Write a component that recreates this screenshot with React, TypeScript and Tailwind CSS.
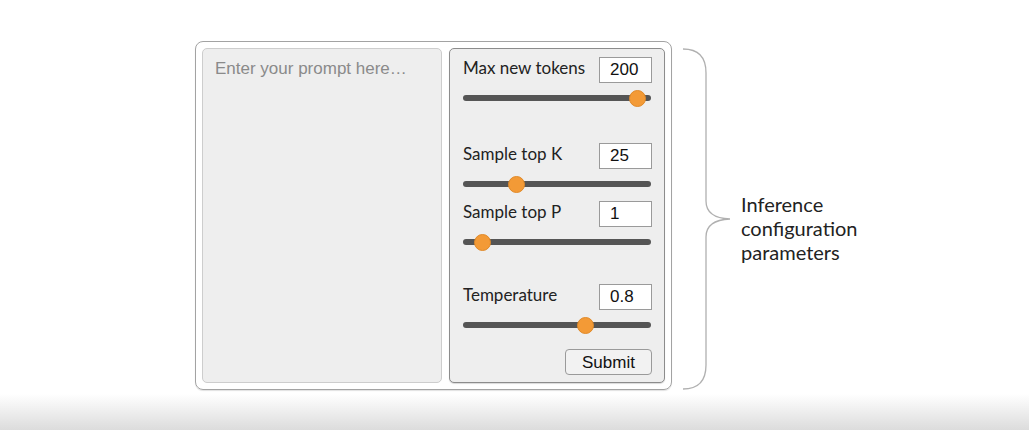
import { useState } from "react";

type Param = {
  label: string;
  value: string;
  pos: number;
  gapBefore: string;
};

const PARAMS: Param[] = [
  { label: "Max new tokens", value: "200", pos: 0.93, gapBefore: "mt-0" },
  { label: "Sample top K", value: "25", pos: 0.287, gapBefore: "mt-[36px]" },
  { label: "Sample top P", value: "1", pos: 0.106, gapBefore: "mt-[8px]" },
  { label: "Temperature", value: "0.8", pos: 0.654, gapBefore: "mt-[33px]" },
];

function Slider({ pos }: { pos: number }) {
  return (
    <div className="relative mt-[6px] h-[18px] w-[188px] flex items-center">
      <div className="h-[6px] w-full rounded-full bg-[#555555]" />
      <div
        className="absolute top-[0.5px] h-[17px] w-[17px] rounded-full bg-[#f39a36] border border-[#e08a2a]"
        style={{ left: `calc(${pos * 100}% - 8.5px)` }}
      />
    </div>
  );
}

function ParamRow({ p }: { p: Param }) {
  const [val, setVal] = useState(p.value);
  return (
    <div className={p.gapBefore}>
      <div className="flex items-start justify-between">
        <span className="text-[17px] leading-[22px] text-[#222] font-['Lato',sans-serif]">
          {p.label}
        </span>
        <input
          value={val}
          onChange={(e) => setVal(e.target.value)}
          className="h-[26px] w-[53px] border border-[#9a9a9a] bg-white pl-[10px] text-[17px] text-[#111] outline-none font-['Liberation_Sans',Arial,sans-serif]"
        />
      </div>
      <Slider pos={p.pos} />
    </div>
  );
}

export default function App() {
  return (
    <div className="flex h-[430px] w-full flex-col bg-white overflow-hidden">
      <div className="flex flex-1 items-start pl-[195px] pt-[41px]">
        <div className="flex h-[349px] w-[477px] gap-[7px] rounded-[8px] border border-[#a3a3a3] p-[6px] shadow-[0_1px_1px_rgba(0,0,0,0.12)]">
          <textarea
            placeholder="Enter your prompt here…"
            className="h-full w-[241px] resize-none rounded-[5px] border border-[#cdcdcd] bg-[#eeeeee] px-[12px] py-[10px] text-[17px] leading-[20px] text-[#333] placeholder-[#8a8a8a] outline-none font-['Liberation_Sans',Arial,sans-serif]"
          />
          <div className="flex h-full w-[217px] flex-col rounded-[5px] border border-[#8c8c8c] bg-[#eeeeee] pl-[13px] pr-[12px] pt-[8px] shadow-[0_1px_1px_rgba(0,0,0,0.15)]">
            {PARAMS.map((p) => (
              <ParamRow key={p.label} p={p} />
            ))}
            <div className="mt-[15px] flex justify-end">
              <button className="h-[26px] w-[87px] rounded-[4px] border border-[#9a9a9a] bg-[#f2f2f2] text-[17px] text-[#111] font-['Liberation_Sans',Arial,sans-serif]">
                Submit
              </button>
            </div>
          </div>
        </div>

        <svg width="50" height="349" viewBox="0 0 50 349" className="ml-[11px] shrink-0">
          <path
            d="M0 8 Q23 8 23 32 L23 160 Q23 177 47 178 Q23 179 23 196 L23 324 Q23 348 0 348"
            fill="none"
            stroke="#b0b0b0"
            strokeWidth="1.3"
          />
        </svg>

        <div className="ml-[8px] mt-[151px] text-[20px] leading-[24px] text-[#222] font-['Lato',sans-serif]">
          Inference
          <br />
          configuration
          <br />
          parameters
        </div>
      </div>
      <div className="h-[36px] bg-gradient-to-b from-white to-[#dcdcdc]" />
    </div>
  );
}
